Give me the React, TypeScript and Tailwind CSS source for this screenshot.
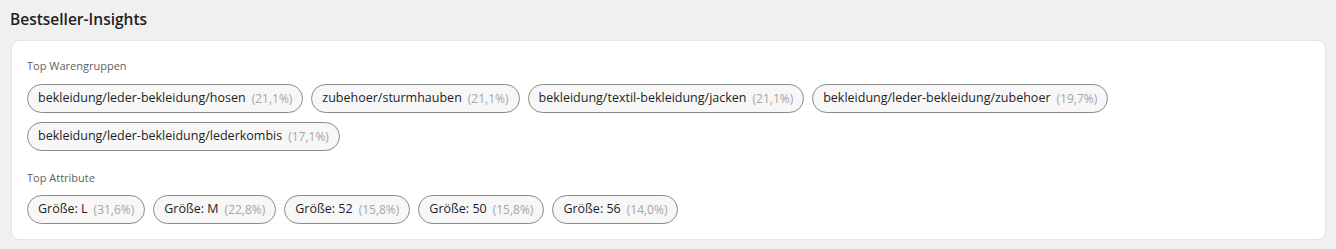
const warengruppen = [
  { label: "bekleidung/leder-bekleidung/hosen", pct: "21,1%" },
  { label: "zubehoer/sturmhauben", pct: "21,1%" },
  { label: "bekleidung/textil-bekleidung/jacken", pct: "21,1%" },
  { label: "bekleidung/leder-bekleidung/zubehoer", pct: "19,7%" },
  { label: "bekleidung/leder-bekleidung/lederkombis", pct: "17,1%" },
];

const attribute = [
  { label: "Größe: L", pct: "31,6%" },
  { label: "Größe: M", pct: "22,8%" },
  { label: "Größe: 52", pct: "15,8%" },
  { label: "Größe: 50", pct: "15,8%" },
  { label: "Größe: 56", pct: "14,0%" },
];

const Chip = ({ label, pct }: { label: string; pct: string }) => (
  <span className="inline-flex items-center h-[29px] px-[10px] rounded-full border border-[#8a8a8a] bg-[#f7f7f7] text-[12.5px] text-[#1f1f1f] leading-none">
    {label}
    <span className="ml-[6px] text-[12px] text-[#a6a6a6]">({pct})</span>
  </span>
);

const App = () => {
  return (
    <div
      className="w-[1336px] h-[249px] bg-[#f0f0f1] px-[11px] pt-[8px]"
      style={{ fontFamily: '"Open Sans", "Noto Sans", sans-serif' }}
    >
      <h2 className="text-[15.5px] font-semibold text-[#222] leading-[22px] -ml-[1px]">
        Bestseller-Insights
      </h2>
      <div className="mt-[10px] w-[1315px] bg-white rounded-lg border border-[#e6e6e6] px-[15px] pt-[17px] pb-[15px]">
        <p className="text-[11px] text-[#5f5f5f] leading-[16px]">Top Warengruppen</p>
        <div className="flex flex-wrap gap-x-2 gap-y-[9px] mt-[10px]">
          {warengruppen.map((w) => (
            <Chip key={w.label} label={w.label} pct={w.pct} />
          ))}
        </div>
        <p className="text-[11px] text-[#5f5f5f] leading-[16px] mt-[19px]">Top Attribute</p>
        <div className="flex flex-wrap gap-2 mt-[9px]">
          {attribute.map((a) => (
            <Chip key={a.label} label={a.label} pct={a.pct} />
          ))}
        </div>
      </div>
    </div>
  );
};

export default App;
